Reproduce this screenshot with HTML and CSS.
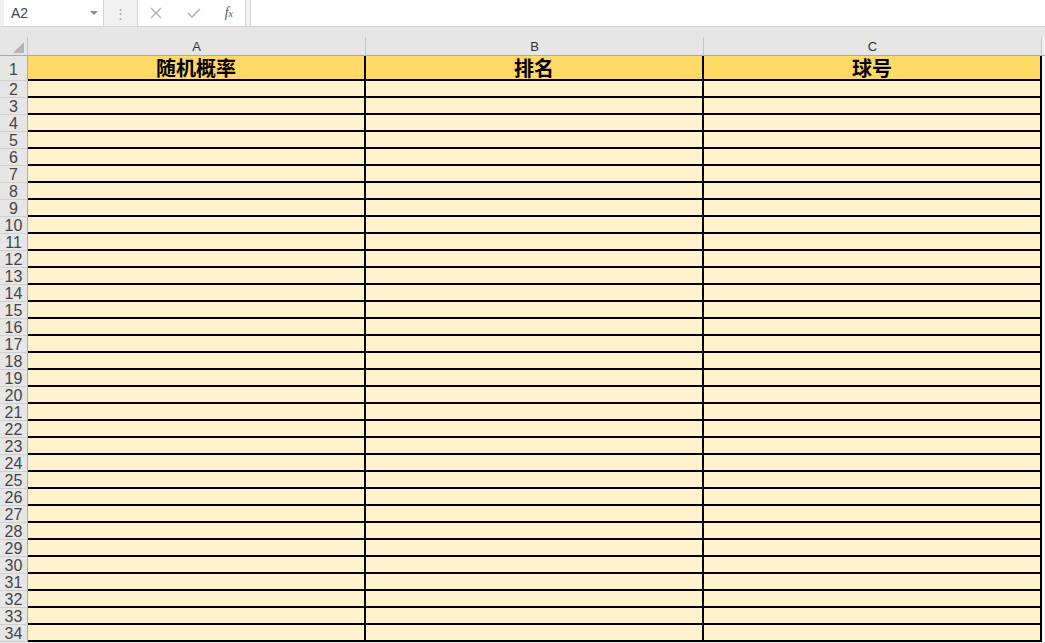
FILE: index.html
```html
<!DOCTYPE html>
<html lang="zh">
<head>
<meta charset="utf-8">
<title>Sheet</title>
<link rel="stylesheet" href="styles.css">
</head>
<body>
<div class="toolbar">
  <div class="namebox"><span class="ref">A2</span><span class="caret"></span></div>
  <div class="dots">⋮</div>
  <div class="fxbox">
    <svg class="ico" width="14" height="14" viewBox="0 0 14 14"><path d="M2 2 L12 12 M12 2 L2 12" stroke="#b3b3b3" stroke-width="1.4" fill="none"/></svg>
    <svg class="ico" width="16" height="14" viewBox="0 0 16 14"><path d="M2 7 L6 11 L14 3" stroke="#b3b3b3" stroke-width="1.6" fill="none"/></svg>
    <span class="fx">f<span class="fxx">x</span></span>
  </div>
  <div class="formula"></div>
</div>
<div class="band"></div>
<div class="sheet">
  <div class="corner"><span class="tri"></span></div><div class="ch">A</div><div class="ch">B</div><div class="ch">C</div><div class="ch last"></div>
  <div class="rh r1">1</div><div class="c h">随机概率</div><div class="c h">排名</div><div class="c h">球号</div><div class="x r1"></div>
  <div class="rh">2</div><div class="c"></div><div class="c"></div><div class="c"></div><div class="x"></div>
  <div class="rh">3</div><div class="c"></div><div class="c"></div><div class="c"></div><div class="x"></div>
  <div class="rh">4</div><div class="c"></div><div class="c"></div><div class="c"></div><div class="x"></div>
  <div class="rh">5</div><div class="c"></div><div class="c"></div><div class="c"></div><div class="x"></div>
  <div class="rh">6</div><div class="c"></div><div class="c"></div><div class="c"></div><div class="x"></div>
  <div class="rh">7</div><div class="c"></div><div class="c"></div><div class="c"></div><div class="x"></div>
  <div class="rh">8</div><div class="c"></div><div class="c"></div><div class="c"></div><div class="x"></div>
  <div class="rh">9</div><div class="c"></div><div class="c"></div><div class="c"></div><div class="x"></div>
  <div class="rh">10</div><div class="c"></div><div class="c"></div><div class="c"></div><div class="x"></div>
  <div class="rh">11</div><div class="c"></div><div class="c"></div><div class="c"></div><div class="x"></div>
  <div class="rh">12</div><div class="c"></div><div class="c"></div><div class="c"></div><div class="x"></div>
  <div class="rh">13</div><div class="c"></div><div class="c"></div><div class="c"></div><div class="x"></div>
  <div class="rh">14</div><div class="c"></div><div class="c"></div><div class="c"></div><div class="x"></div>
  <div class="rh">15</div><div class="c"></div><div class="c"></div><div class="c"></div><div class="x"></div>
  <div class="rh">16</div><div class="c"></div><div class="c"></div><div class="c"></div><div class="x"></div>
  <div class="rh">17</div><div class="c"></div><div class="c"></div><div class="c"></div><div class="x"></div>
  <div class="rh">18</div><div class="c"></div><div class="c"></div><div class="c"></div><div class="x"></div>
  <div class="rh">19</div><div class="c"></div><div class="c"></div><div class="c"></div><div class="x"></div>
  <div class="rh">20</div><div class="c"></div><div class="c"></div><div class="c"></div><div class="x"></div>
  <div class="rh">21</div><div class="c"></div><div class="c"></div><div class="c"></div><div class="x"></div>
  <div class="rh">22</div><div class="c"></div><div class="c"></div><div class="c"></div><div class="x"></div>
  <div class="rh">23</div><div class="c"></div><div class="c"></div><div class="c"></div><div class="x"></div>
  <div class="rh">24</div><div class="c"></div><div class="c"></div><div class="c"></div><div class="x"></div>
  <div class="rh">25</div><div class="c"></div><div class="c"></div><div class="c"></div><div class="x"></div>
  <div class="rh">26</div><div class="c"></div><div class="c"></div><div class="c"></div><div class="x"></div>
  <div class="rh">27</div><div class="c"></div><div class="c"></div><div class="c"></div><div class="x"></div>
  <div class="rh">28</div><div class="c"></div><div class="c"></div><div class="c"></div><div class="x"></div>
  <div class="rh">29</div><div class="c"></div><div class="c"></div><div class="c"></div><div class="x"></div>
  <div class="rh">30</div><div class="c"></div><div class="c"></div><div class="c"></div><div class="x"></div>
  <div class="rh">31</div><div class="c"></div><div class="c"></div><div class="c"></div><div class="x"></div>
  <div class="rh">32</div><div class="c"></div><div class="c"></div><div class="c"></div><div class="x"></div>
  <div class="rh">33</div><div class="c"></div><div class="c"></div><div class="c"></div><div class="x"></div>
  <div class="rh">34</div><div class="c"></div><div class="c"></div><div class="c"></div><div class="x"></div>
</div>
</body>
</html>
```

FILE: styles.css
```css
* { box-sizing: border-box; }
html, body { margin: 0; padding: 0; }
body {
  width: 1045px;
  height: 643px;
  overflow: hidden;
  background: #e6e6e6;
  font-family: "Liberation Sans", "Noto Sans CJK SC", sans-serif;
  color: #333;
}
.toolbar {
  display: flex;
  height: 27px;
  background: #f1f1f1;
  border-bottom: 1px solid #d6d6d6;
}
.namebox {
  width: 100px;
  margin-left: 4px;
  background: #fff;
  border-right: 1px solid #d4d4d4;
  display: flex;
  align-items: center;
  justify-content: space-between;
  padding: 0 5px 0 7px;
}
.ref { font-size: 14px; color: #444; }
.caret {
  width: 0; height: 0;
  border-left: 4px solid transparent;
  border-right: 4px solid transparent;
  border-top: 4px solid #8a8a8a;
}
.dots {
  width: 33px;
  display: flex;
  align-items: center;
  justify-content: center;
  color: #a8a8a8;
  font-size: 13px;
}
.fxbox {
  width: 109px;
  background: #fff;
  border-left: 1px solid #d4d4d4;
  border-right: 1px solid #d4d4d4;
  display: flex;
  align-items: center;
  justify-content: space-between;
  padding: 0 12px 0 11px;
}
.fx {
  font-family: "Liberation Serif", "DejaVu Serif", serif;
  font-style: italic;
  font-size: 14px;
  color: #555;
}
.fxx { font-size: 10px; }
.formula {
  flex: 1;
  margin-left: 4px;
  background: #fff;
  border-left: 1px solid #d4d4d4;
}
.band { height: 10px; background: #e6e6e6; }
.sheet {
  display: grid;
  grid-template-columns: 28px 338px 338px 338px 1fr;
  grid-template-rows: 19px 25px;
  grid-auto-rows: 17px;
}
.corner {
  background: #e6e6e6;
  border-right: 1px solid #c6c6c6;
  border-bottom: 1px solid #ababab;
  display: flex;
  align-items: flex-end;
  justify-content: flex-end;
  padding: 0 3px 2px 0;
}
.tri {
  width: 0; height: 0;
  border-left: 11px solid transparent;
  border-bottom: 11px solid #b4b4b4;
}
.ch {
  background: #e6e6e6;
  border-right: 1px solid #c6c6c6;
  border-bottom: 1px solid #ababab;
  font-size: 13px;
  line-height: 19px;
  text-align: center;
  color: #333;
}
.ch.last { border-right: none; background: #f0f0f0; }
.rh {
  background: #e6e6e6;
  border-right: 1px solid #ababab;
  border-bottom: 1px solid #cfcfcf;
  font-size: 16px;
  line-height: 17px;
  text-align: center;
  color: #444;
}
.rh.r1 { line-height: 28px; }
.c {
  background: #fff2cc;
  border-right: 2px solid #000;
  border-bottom: 2px solid #000;
}
.c.h {
  background: #ffd966;
  font-family: "Noto Sans CJK SC", sans-serif;
  font-weight: bold;
  font-size: 20px;
  line-height: 23px;
  color: #000;
  text-align: center;
}
.x { background: #f7f7f7; }
```
